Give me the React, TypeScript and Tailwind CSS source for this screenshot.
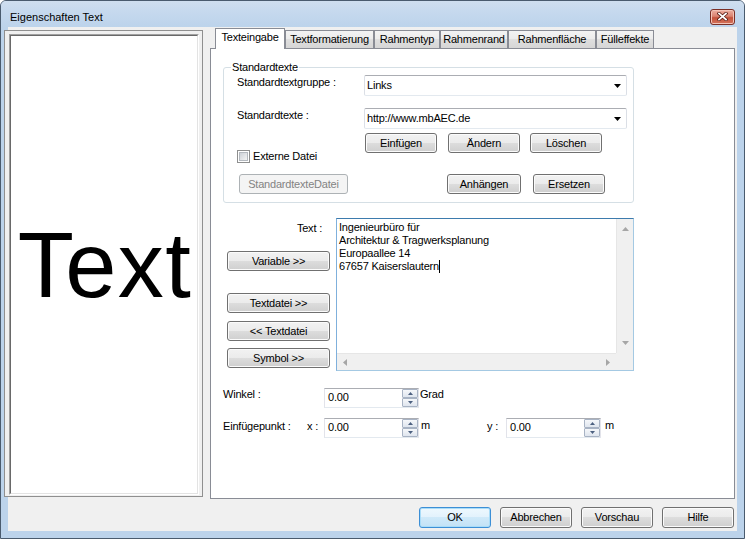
import React from "react";

const FONT = "font-['Liberation_Sans',Arial,sans-serif]";

function Button({
  children,
  className = "",
  disabled = false,
  primary = false,
}: {
  children: React.ReactNode;
  className?: string;
  disabled?: boolean;
  primary?: boolean;
}) {
  let look =
    "border-[#707070] text-black bg-[linear-gradient(180deg,#f2f2f2_0%,#ebebeb_50%,#dddddd_50%,#cfcfcf_100%)] shadow-[inset_0_0_0_1px_#fbfbfb]";
  if (primary)
    look =
      "border-[#3c8fd6] text-black bg-[linear-gradient(180deg,#eef8fe_0%,#e2f2fc_50%,#cfe9f9_50%,#c2e2f6_100%)] shadow-[inset_0_0_0_1px_#a9dcf8]";
  if (disabled) look = "border-[#adb2b5] text-[#838383] bg-[#f4f4f4]";
  return (
    <div className={`flex shrink-0 items-center justify-center rounded-[3px] border leading-[13px] ${look} ${className}`}>
      {children}
    </div>
  );
}

function Combo({ value }: { value: string }) {
  return (
    <div className="flex h-[21px] w-[263px] items-center rounded-[2px] border border-[#abadb3] border-x-[#dbdfe6] border-b-[#e3e9ef] bg-white pl-[2px]">
      <span className="flex-1 leading-[13px]">{value}</span>
      <svg width="7" height="4" viewBox="0 0 7 4" className="mr-[5px]">
        <path d="M0 0h7L3.5 4z" fill="#000" />
      </svg>
    </div>
  );
}

function SpinHalf({ up }: { up?: boolean }) {
  return (
    <div className="flex h-[9px] items-center justify-center rounded-[1px] border border-[#a8b3c4] bg-[linear-gradient(180deg,#f5f7fa,#dfe5ee)]">
      <svg width="5" height="3" viewBox="0 0 5 3">
        <path d={up ? "M0 3h5L2.5 0z" : "M0 0h5L2.5 3z"} fill="#4c6080" />
      </svg>
    </div>
  );
}

function Spin() {
  return (
    <div className="flex h-[20px] w-[95px] shrink-0 border border-[#abadb3] border-x-[#e2e3ea] border-b-[#e3e9ef] bg-white">
      <span className="flex-1 pl-[3px] pt-[2px] leading-[13px]">0.00</span>
      <div className="flex w-[16px] flex-col">
        <SpinHalf up />
        <SpinHalf />
      </div>
    </div>
  );
}

function Arrow({ dir }: { dir: "up" | "down" | "left" | "right" }) {
  const d = {
    up: "M0 4h7L3.5 0z",
    down: "M0 0h7L3.5 4z",
    left: "M4 0v7L0 3.5z",
    right: "M0 0v7L4 3.5z",
  }[dir];
  const vertical = dir === "up" || dir === "down";
  return (
    <svg width={vertical ? 7 : 4} height={vertical ? 4 : 7} viewBox={vertical ? "0 0 7 4" : "0 0 4 7"}>
      <path d={d} fill="#a6a6a6" />
    </svg>
  );
}

function TextArea() {
  return (
    <div className="ml-[6px] flex h-[153px] w-[298px] flex-col border border-[#a4c9e3] border-l-[#7fb0dc] border-t-[#3d7bad] bg-white">
      <div className="flex flex-1">
        <div className="flex-1 pl-[2px] pt-[2px] leading-[13px]">
          <div>Ingenieurbüro für</div>
          <div>Architektur &amp; Tragwerksplanung</div>
          <div>Europaallee 14</div>
          <div>
            67657 Kaiserslautern
            <span className="inline-block h-[13px] w-px bg-black align-top" />
          </div>
        </div>
        <div className="flex w-[17px] flex-col items-center justify-between border-l border-[#e6e6e6] bg-[#f0f0f0] py-[8px]">
          <Arrow dir="up" />
          <Arrow dir="down" />
        </div>
      </div>
      <div className="flex h-[17px]">
        <div className="flex flex-1 items-center justify-between border-t border-[#e6e6e6] bg-[#f0f0f0] px-[6px]">
          <Arrow dir="left" />
          <Arrow dir="right" />
        </div>
        <div className="w-[17px] bg-[#f0f0f0]" />
      </div>
    </div>
  );
}

function Checkbox({ label }: { label: string }) {
  return (
    <div className="flex items-center">
      <div className="h-[13px] w-[13px] border border-[#8e8f8f] bg-white p-[1px]">
        <div className="h-full w-full border border-[#b4b9bf] bg-[linear-gradient(135deg,#cdd1d7,#f4f4f4)]" />
      </div>
      <span className="ml-[3px] leading-[13px]">{label}</span>
    </div>
  );
}

const TABS = [
  { label: "Textformatierung", w: "w-[89px]" },
  { label: "Rahmentyp", w: "w-[66px]" },
  { label: "Rahmenrand", w: "w-[68px]" },
  { label: "Rahmenfläche", w: "w-[88px]" },
  { label: "Fülleffekte", w: "w-[58px]" },
];

function TabPage() {
  return (
    <div className="flex flex-col">
      {/* Standardtexte group */}
      <fieldset className="ml-[12px] mt-[12px] w-[411px] rounded-[3px] border border-[#d5dfe5] pb-[8px]">
        <legend className="ml-[7px] px-[1px] leading-[13px]">Standardtexte</legend>
        <div className="mt-[1px] flex items-start">
          <div className="w-[140px] pl-[13px] pt-[1px] leading-[13px]">Standardtextgruppe :</div>
          <Combo value="Links" />
        </div>
        <div className="mt-[12px] flex items-start">
          <div className="w-[140px] pl-[13px] pt-[1px] leading-[13px]">Standardtexte :</div>
          <Combo value="http://www.mbAEC.de" />
        </div>
        <div className="mt-[4px] flex items-start">
          <div className="w-[140px] pl-[13px] pt-[17px]">
            <Checkbox label="Externe Datei" />
          </div>
          <Button className="ml-[1px] h-[20px] w-[72px]">Einfügen</Button>
          <Button className="ml-[11px] h-[20px] w-[72px]">Ändern</Button>
          <Button className="ml-[10px] h-[20px] w-[72px]">Löschen</Button>
        </div>
        <div className="mt-[11px] flex items-start pl-[15px]">
          <Button disabled className="h-[20px] w-[109px]">
            StandardtexteDatei
          </Button>
          <Button className="ml-[99px] h-[20px] w-[74px]">Anhängen</Button>
          <Button className="ml-[12px] h-[20px] w-[72px]">Ersetzen</Button>
        </div>
      </fieldset>

      {/* Text input */}
      <div className="ml-[16px] mt-[15px] flex items-start">
        <div className="flex w-[103px] flex-col">
          <div className="mt-[4px] pr-[8px] text-right leading-[13px]">Text :</div>
          <Button className="mt-[16px] h-[20px] w-[103px]">Variable &gt;&gt;</Button>
          <Button className="mt-[22px] h-[20px] w-[103px]">Textdatei &gt;&gt;</Button>
          <Button className="mt-[8px] h-[20px] w-[103px]">&lt;&lt; Textdatei</Button>
          <Button className="mt-[7px] h-[20px] w-[103px]">Symbol &gt;&gt;</Button>
        </div>
        <TextArea />
      </div>

      {/* Winkel / Einfügepunkt */}
      <div className="ml-[12px] mt-[17px] flex items-start leading-[13px]">
        <div className="w-[101px]">Winkel :</div>
        <Spin />
        <div className="ml-[1px]">Grad</div>
      </div>
      <div className="ml-[12px] mt-[10px] flex items-start leading-[13px]">
        <div className="w-[84px] pt-[2px]">Einfügepunkt :</div>
        <div className="w-[17px] pt-[2px]">x :</div>
        <Spin />
        <div className="ml-[2px] w-[66px] pt-[1px]">m</div>
        <div className="w-[19px] pt-[2px]">y :</div>
        <Spin />
        <div className="ml-[4px] pt-[1px]">m</div>
      </div>
    </div>
  );
}

function TabControl() {
  return (
    <div className="ml-[7px] flex w-[525px] flex-col">
      <div className="flex items-start pl-[5px]">
        <div className="relative z-10 flex h-[21px] w-[70px] justify-center border border-b-0 border-[#898c95] bg-white pt-[2px] leading-[13px]">
          Texteingabe
        </div>
        {TABS.map((t) => (
          <div
            key={t.label}
            className={`mt-[2px] flex h-[18px] ${t.w} justify-center border border-b-0 border-[#898c95] bg-[linear-gradient(180deg,#f3f3f3_0%,#ebebeb_50%,#dfdfdf_50%,#d6d6d6_100%)] pt-[2px] leading-[13px]`}
          >
            {t.label}
          </div>
        ))}
      </div>
      <div className="mt-[-1px] h-[451px] border border-[#898c95] bg-white">
        <TabPage />
      </div>
    </div>
  );
}

function Preview() {
  return (
    <div className="ml-[-4px] mt-[2px] flex h-[467px] w-[199px] border border-[#8f8f8f] bg-[#f0f0f0] pb-[1px] pl-[4px] pr-[3px] pt-[3px]">
      <div className="flex flex-1 border border-[#a0a0a0] border-b-white border-r-white">
        <div className="flex flex-1 items-center justify-center overflow-hidden border border-[#696969] border-b-[#e3e3e3] border-r-[#e3e3e3] bg-white">
          <span className="pl-[2px] text-[92px] leading-none tracking-[1.5px]">Text</span>
        </div>
      </div>
    </div>
  );
}

function CloseButton() {
  return (
    <div className="mt-[5px] flex h-[16px] w-[25px] items-center justify-center rounded-[3px] border border-[#7a2f26] bg-[linear-gradient(180deg,#eeb0a2_0%,#d98270_45%,#c4523c_55%,#d4745c_100%)] shadow-[inset_0_0_0_1px_#f3c4b8]">
      <svg width="11" height="9" viewBox="0 0 11 9">
        <path d="M2 1.5L9 7.5M9 1.5L2 7.5" stroke="#5b1e16" strokeWidth="3.4" strokeLinecap="square" />
        <path d="M2 1.5L9 7.5M9 1.5L2 7.5" stroke="#ffffff" strokeWidth="1.7" strokeLinecap="square" />
      </svg>
    </div>
  );
}

export default function App() {
  return (
    <div className={`h-[539px] w-[745px] ${FONT} text-[11px] tracking-[-0.2px] text-black`}>
      <div className="flex h-full w-full flex-col rounded-t-[6px] border border-[#4a5b6e] bg-[#bcd3eb]">
        <div className="flex h-[26px] shrink-0 items-center rounded-t-[5px] bg-[linear-gradient(180deg,#cfdeef_0%,#c6d9ee_40%,#bcd3eb_100%)] pl-[9px] pr-[9px]">
          <span className="flex-1 pt-[6px] leading-[13px] tracking-normal">Eigenschaften Text</span>
          <CloseButton />
        </div>
        <div className="mx-[7px] mb-[7px] flex flex-1 flex-col bg-[#f0f0f0]">
          <div className="mt-[1px] flex items-start">
            <Preview />
            <TabControl />
          </div>
          <div className="mt-[8px] flex justify-end gap-[9px] pr-[3px]">
            <Button primary className="h-[21px] w-[72px]">OK</Button>
            <Button className="h-[21px] w-[72px]">Abbrechen</Button>
            <Button className="h-[21px] w-[72px]">Vorschau</Button>
            <Button className="h-[21px] w-[72px]">Hilfe</Button>
          </div>
        </div>
      </div>
    </div>
  );
}
